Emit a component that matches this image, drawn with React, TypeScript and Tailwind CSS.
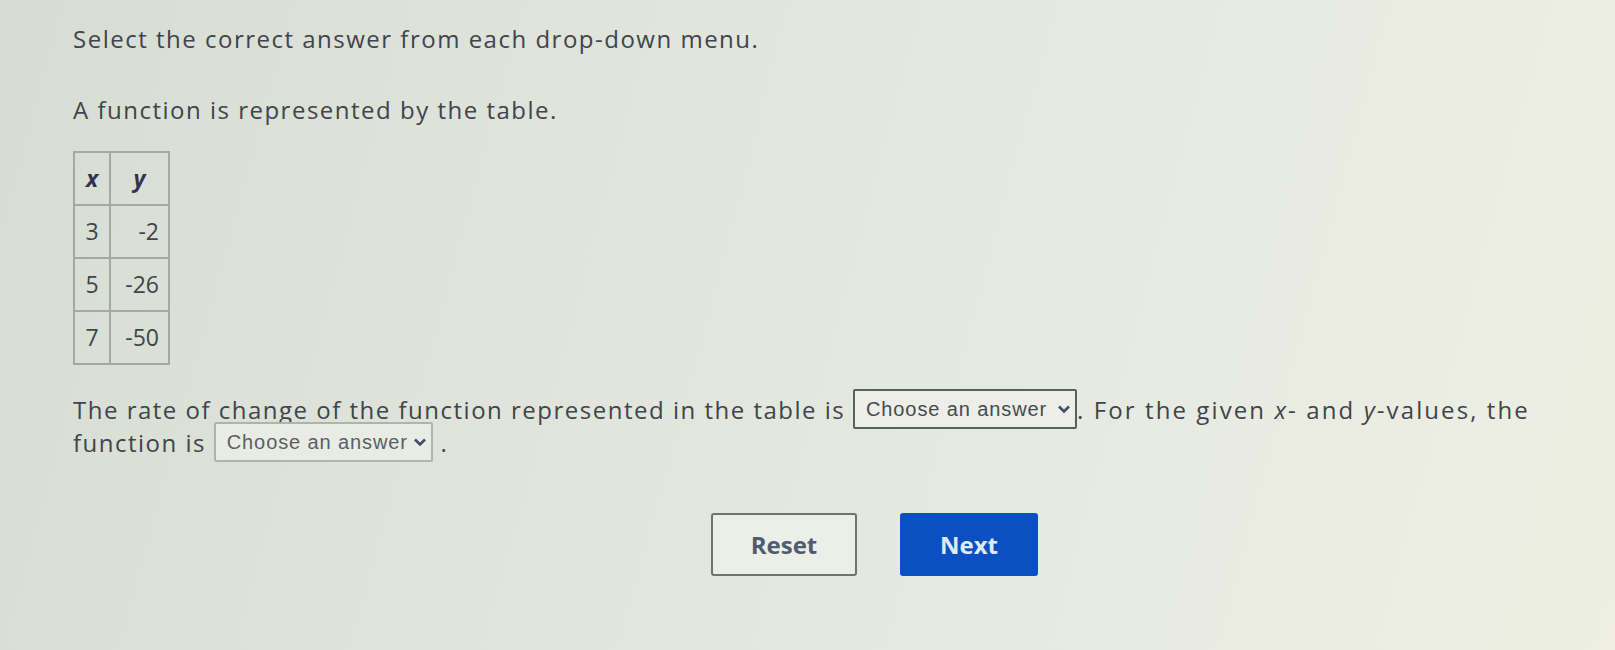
const rows = [
  { x: '3', y: '-2' },
  { x: '5', y: '-26' },
  { x: '7', y: '-50' },
];

function Dropdown({ width, dark }: { width: string; dark?: boolean }) {
  return (
    <span
      className={`inline-flex items-center justify-between gap-[3px] align-top -my-[4px] h-[40px] ${width} pl-[11px] pr-[4px] rounded-[2px] tracking-normal font-['Liberation_Sans',sans-serif] text-[20px] ${
        dark
          ? 'border-2 border-[#5c605c] bg-[#eceee7] text-[#454a52]'
          : 'border-2 border-[#b0b4ad] bg-[#e9ece4] text-[#5a5e64]'
      }`}
    >
      <span className="tracking-[0.9px]">Choose an answer</span>
      <svg width="14" height="10" viewBox="0 0 14 10" className="shrink-0">
        <path d="M2 2.5 L7 7.5 L12 2.5" stroke="#3e4c6e" strokeWidth="2.6" fill="none" />
      </svg>
    </span>
  );
}

export default function App() {
  return (
    <div className="w-[1615px] h-[650px] overflow-hidden bg-[linear-gradient(105deg,#d8ddd3_0%,#dfe3da_30%,#e5e9e0_60%,#ebede3_85%,#eeefe2_100%)] font-['Open_Sans',sans-serif] text-[#40444c]">
      <div className="pl-[73px] pt-[24px]">
        <p className="text-[24px] leading-[30px] tracking-[1.5px]">Select the correct answer from each drop-down menu.</p>
        <p className="mt-[41px] text-[24px] leading-[30px] tracking-[1.5px]">A function is represented by the table.</p>

        <table className="mt-[26px] border-collapse text-[23px]">
          <thead>
            <tr className="h-[53px]">
              <th className="w-[36px] border-2 border-[#a5a9a1] font-bold italic text-[#2f3550]">x</th>
              <th className="w-[59px] border-2 border-[#a5a9a1] font-bold italic text-[#2f3550]">y</th>
            </tr>
          </thead>
          <tbody>
            {rows.map((r) => (
              <tr key={r.x} className="h-[53px]">
                <td className="border-2 border-[#a5a9a1] text-center">{r.x}</td>
                <td className="border-2 border-[#a5a9a1] text-right pr-[9px]">{r.y}</td>
              </tr>
            ))}
          </tbody>
        </table>

        <div className="mt-[28px] w-[1490px] text-[24px] leading-[33px] tracking-[1.5px]">
          The rate of change of the function represented in the table is{' '}
          <Dropdown width="w-[224px]" dark />
          <span className="tracking-[2.1px]">
            . For the given <i>x</i>- and <i>y</i>-values, the
          </span>{' '}
          function is <Dropdown width="w-[219px]" /> .
        </div>

        <div className="mt-[54px] pl-[638px] flex gap-[43px]">
          <button className="w-[146px] h-[63px] rounded-[3px] border-2 border-[#6f736f] bg-[#eceee8] text-[24px] font-bold text-[#4f5b73]">
            Reset
          </button>
          <button className="w-[138px] h-[63px] rounded-[3px] bg-[#0a50c2] text-[24px] font-bold text-[#e0ebf8]">
            Next
          </button>
        </div>
      </div>
    </div>
  );
}
